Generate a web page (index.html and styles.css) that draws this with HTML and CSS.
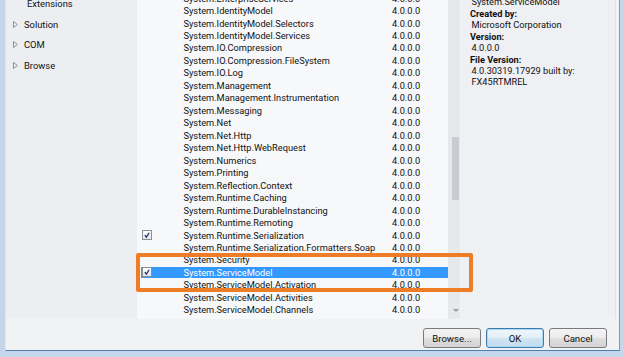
FILE: index.html
```html
<!DOCTYPE html>
<html lang="en">
<head>
    <meta charset="UTF-8">
    <title>Reference Manager</title>
    <link rel="stylesheet" href="styles.css">
</head>
<body>
    <div class="window">
        <div class="dialog">
            <div class="main">
                <nav class="nav">
                    <div class="nav-item child">Extensions</div>
                    <div class="nav-item"><svg class="arrow" viewBox="0 0 5 7" width="5" height="7"><path d="M0.5 0.5 L4.3 3.5 L0.5 6.5 Z" fill="#f4f5f7" stroke="#8a8d92" stroke-width="1"/></svg>Solution</div>
                    <div class="nav-item"><svg class="arrow" viewBox="0 0 5 7" width="5" height="7"><path d="M0.5 0.5 L4.3 3.5 L0.5 6.5 Z" fill="#f4f5f7" stroke="#8a8d92" stroke-width="1"/></svg>COM</div>
                    <div class="nav-item"><svg class="arrow" viewBox="0 0 5 7" width="5" height="7"><path d="M0.5 0.5 L4.3 3.5 L0.5 6.5 Z" fill="#f4f5f7" stroke="#8a8d92" stroke-width="1"/></svg>Browse</div>
                </nav>

                <div class="list-pane">
                    <div class="list">
                        <div class="row"><span class="check"></span><span class="name">System.EnterpriseServices</span><span class="ver">4.0.0.0</span></div>
                        <div class="row"><span class="check"></span><span class="name">System.IdentityModel</span><span class="ver">4.0.0.0</span></div>
                        <div class="row"><span class="check"></span><span class="name">System.IdentityModel.Selectors</span><span class="ver">4.0.0.0</span></div>
                        <div class="row"><span class="check"></span><span class="name">System.IdentityModel.Services</span><span class="ver">4.0.0.0</span></div>
                        <div class="row"><span class="check"></span><span class="name">System.IO.Compression</span><span class="ver">4.0.0.0</span></div>
                        <div class="row"><span class="check"></span><span class="name">System.IO.Compression.FileSystem</span><span class="ver">4.0.0.0</span></div>
                        <div class="row"><span class="check"></span><span class="name">System.IO.Log</span><span class="ver">4.0.0.0</span></div>
                        <div class="row"><span class="check"></span><span class="name">System.Management</span><span class="ver">4.0.0.0</span></div>
                        <div class="row"><span class="check"></span><span class="name">System.Management.Instrumentation</span><span class="ver">4.0.0.0</span></div>
                        <div class="row"><span class="check"></span><span class="name">System.Messaging</span><span class="ver">4.0.0.0</span></div>
                        <div class="row"><span class="check"></span><span class="name">System.Net</span><span class="ver">4.0.0.0</span></div>
                        <div class="row"><span class="check"></span><span class="name">System.Net.Http</span><span class="ver">4.0.0.0</span></div>
                        <div class="row"><span class="check"></span><span class="name">System.Net.Http.WebRequest</span><span class="ver">4.0.0.0</span></div>
                        <div class="row"><span class="check"></span><span class="name">System.Numerics</span><span class="ver">4.0.0.0</span></div>
                        <div class="row"><span class="check"></span><span class="name">System.Printing</span><span class="ver">4.0.0.0</span></div>
                        <div class="row"><span class="check"></span><span class="name">System.Reflection.Context</span><span class="ver">4.0.0.0</span></div>
                        <div class="row"><span class="check"></span><span class="name">System.Runtime.Caching</span><span class="ver">4.0.0.0</span></div>
                        <div class="row"><span class="check"></span><span class="name">System.Runtime.DurableInstancing</span><span class="ver">4.0.0.0</span></div>
                        <div class="row"><span class="check"></span><span class="name">System.Runtime.Remoting</span><span class="ver">4.0.0.0</span></div>
                        <div class="row"><span class="check checked"><svg viewBox="0 0 10 10" width="10" height="10"><path d="M2.3 5.2 L4.2 7.6 L7.8 2.2" fill="none" stroke="#1c2f6e" stroke-width="1.6"/></svg></span><span class="name">System.Runtime.Serialization</span><span class="ver">4.0.0.0</span></div>
                        <div class="row"><span class="check"></span><span class="name">System.Runtime.Serialization.Formatters.Soap</span><span class="ver">4.0.0.0</span></div>
                        <div class="row"><span class="check"></span><span class="name">System.Security</span><span class="ver">4.0.0.0</span></div>
                        <div class="row selected"><span class="check checked"><svg viewBox="0 0 10 10" width="10" height="10"><path d="M2.3 5.2 L4.2 7.6 L7.8 2.2" fill="none" stroke="#1c2f6e" stroke-width="1.6"/></svg></span><span class="name">System.ServiceModel</span><span class="ver">4.0.0.0</span></div>
                        <div class="row"><span class="check"></span><span class="name">System.ServiceModel.Activation</span><span class="ver">4.0.0.0</span></div>
                        <div class="row"><span class="check"></span><span class="name">System.ServiceModel.Activities</span><span class="ver">4.0.0.0</span></div>
                        <div class="row"><span class="check"></span><span class="name">System.ServiceModel.Channels</span><span class="ver">4.0.0.0</span></div>
                        <div class="row"><span class="check"></span><span class="name">System.ServiceModel.Discovery</span><span class="ver">4.0.0.0</span></div>
                    </div>
                    <div class="scrollbar">
                        <div class="thumb"></div>
                        <div class="down"></div>
                    </div>
                </div>

                <aside class="details">
                    <div class="value">System.ServiceModel</div>
                    <div class="label">Created by:</div>
                    <div class="value">Microsoft Corporation</div>
                    <div class="label">Version:</div>
                    <div class="value">4.0.0.0</div>
                    <div class="label">File Version:</div>
                    <div class="value">4.0.30319.17929 built by:</div>
                    <div class="value">FX45RTMREL</div>
                </aside>
            </div>

            <div class="footer">
                <button class="btn">Browse...</button>
                <button class="btn default">OK</button>
                <button class="btn">Cancel</button>
            </div>

            <div class="callout"></div>
        </div>
    </div>
</body>
</html>
```

FILE: styles.css
```css
* {
    box-sizing: border-box;
}
body {
    margin: 0;
    width: 623px;
    height: 357px;
    overflow: hidden;
    font-family: Roboto, "Segoe UI", sans-serif;
    color: #111;
    background: #c5d6eb;
}
.window {
    height: 357px;
    padding: 0 3px 6px 5px;
    background: #c5d6eb;
}
.dialog {
    position: relative;
    height: 351px;
    display: flex;
    flex-direction: column;
    background: #f1f2f3;
    border-left: 1px solid #dde6f1;
    border-right: 1px solid #7d9cc0;
    border-bottom: 1px solid #4f7fae;
}
.main {
    height: 319px;
    display: flex;
    padding-right: 3px;
}

/* left navigation */
.nav {
    width: 131px;
    background: #eceef2;
    overflow: hidden;
}
.nav-item {
    height: 20.8px;
    font-size: 9.4px;
    display: flex;
    align-items: center;
    padding-left: 7px;
}
.nav-item.child {
    margin-top: -7px;
    padding-left: 21px;
}
.arrow {
    display: block;
    margin-right: 6px;
}

/* assembly list */
.list-pane {
    width: 323px;
    display: flex;
    background: #f7f8f9;
}
.list {
    flex: 1;
    overflow: hidden;
    padding-left: 3.5px;
}
.row {
    height: 12.47px;
    display: flex;
    align-items: center;
    font-size: 9.25px;
    padding: 1px 0 0.5px;
    background-clip: content-box;
}
.row:first-child {
    margin-top: -8.4px;
}
.row.selected {
    background-color: #3399ff;
    color: #fff;
}
.check {
    width: 10px;
    height: 10px;
    margin-left: 1.5px;
    flex: none;
}
.check.checked {
    border: 1px solid #8e8f91;
    background: linear-gradient(#ffffff, #e3e4e6);
    display: flex;
    align-items: center;
    justify-content: center;
}
.check svg {
    display: block;
}
.name {
    width: 240px;
    flex: none;
    padding-left: 31.5px;
    white-space: nowrap;
    overflow: hidden;
}
.scrollbar {
    width: 12px;
    background: #e6e8ec;
    display: flex;
    flex-direction: column;
    align-items: center;
}
.thumb {
    width: 7px;
    height: 63px;
    margin: 137px 0 0 2px;
    background: #c9ccd3;
    border-radius: 1px;
}
.down {
    margin-top: auto;
    margin-bottom: 7px;
    margin-left: 3px;
    width: 0;
    height: 0;
    border-left: 3px solid transparent;
    border-right: 3px solid transparent;
    border-top: 3px solid #9a9da3;
}

/* details panel */
.details {
    width: 154px;
    margin-left: 2px;
    background: #eff0f3;
    padding-left: 8px;
    font-size: 9.2px;
    border-right: 1px solid #dfe2e6;
}
.details .label,
.details .value {
    height: 11.45px;
    line-height: 11.45px;
    white-space: nowrap;
}
.details .value:first-child {
    margin-top: -3.6px;
}
.details .label {
    font-weight: bold;
}
.details .value {
    padding-left: 1.5px;
}

/* buttons */
.footer {
    flex: 1;
    display: flex;
    justify-content: flex-end;
    align-items: flex-start;
    gap: 5px;
    padding: 9px 12px 0 0;
}
.btn {
    width: 58px;
    height: 20px;
    font-family: inherit;
    font-size: 9.6px;
    color: #111;
    border: 1px solid #777a7f;
    border-radius: 3px;
    background: linear-gradient(#f4f4f4 0%, #ececec 50%, #dfdfdf 51%, #d3d3d3 100%);
    padding: 0;
}
.btn.default {
    border-color: #3d7bad;
    box-shadow: inset 0 0 0 1px #a9dbf6;
    background: linear-gradient(#eef6fb 0%, #e3eff8 50%, #cfe4f3 51%, #c2dcef 100%);
}

/* orange annotation box drawn over the list */
.callout {
    position: absolute;
    left: 130px;
    top: 253px;
    width: 337px;
    height: 39px;
    border: 4px solid #ef7d27;
    border-radius: 2px;
}
```
